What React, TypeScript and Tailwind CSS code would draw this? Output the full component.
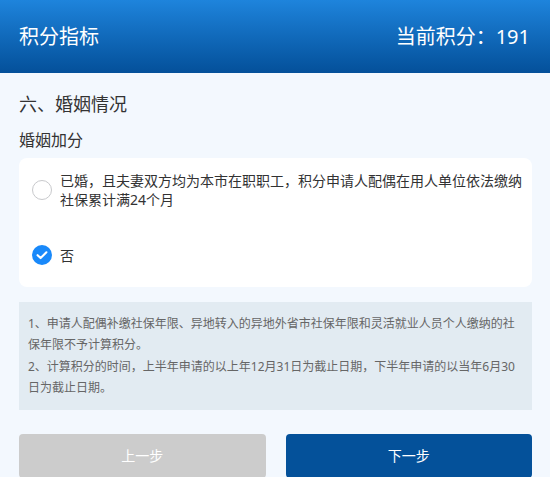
const notes = [
  ["1、申请人配偶补缴社保年限、异地转入的异地外省市社保年限和灵活就业人员个人缴纳的社", "保年限不予计算积分。"],
  ["2、计算积分的时间，上半年申请的以上年12月31日为截止日期，下半年申请的以当年6月30", "日为截止日期。"],
];

function RadioIcon({ checked }: { checked: boolean }) {
  if (!checked) {
    return (
      <span className="block h-[20px] w-[20px] shrink-0 rounded-full border border-[#c8c9cc] bg-white" />
    );
  }
  return (
    <svg viewBox="0 0 20 20" className="h-[20px] w-[20px] shrink-0">
      <circle cx="10" cy="10" r="10" fill="#1989fa" />
      <path
        d="M5.6 10.2 L8.6 13.1 L14.4 7.3"
        fill="none"
        stroke="#fff"
        strokeWidth="2.1"
        strokeLinecap="round"
        strokeLinejoin="round"
      />
    </svg>
  );
}

function Option({ lines, checked }: { lines: string[]; checked: boolean }) {
  return (
    <div className="flex items-center gap-[8px]">
      <RadioIcon checked={checked} />
      <p className="text-[14px] leading-[19px] text-[#323233]">
        {lines.map((line) => (
          <span key={line} className="block whitespace-nowrap">
            {line}
          </span>
        ))}
      </p>
    </div>
  );
}

export default function App() {
  return (
    <div
      className="min-h-[477px] bg-[#f3f8fe]"
      style={{ fontFamily: '"Noto Sans", "Noto Sans CJK SC", sans-serif' }}
    >
      <header className="flex h-[73px] items-center justify-between bg-gradient-to-b from-[#1e84dc] to-[#04509a] pl-[19px] pr-[20px] text-white">
        <h1 className="text-[20px] leading-[28px]">积分指标</h1>
        <p className="text-[20px] leading-[28px]">当前积分：191</p>
      </header>

      <main className="pl-[19px] pr-[18px] pt-[18px]">
        <h2 className="text-[18px] leading-[27px] text-[#333]">六、婚姻情况</h2>
        <h3 className="mt-[10px] text-[16px] leading-[24px] text-[#333]">婚姻加分</h3>

        <div className="mt-[6px] rounded-[8px] bg-white pb-[22px] pl-[13px] pt-[13px]">
          <Option
            checked={false}
            lines={[
              "已婚，且夫妻双方均为本市在职职工，积分申请人配偶在用人单位依法缴纳",
              "社保累计满24个月",
            ]}
          />
          <div className="mt-[36px]">
            <Option checked lines={["否"]} />
          </div>
        </div>

        <div className="mt-[15px] bg-[#e2ebf2] py-[11px] pl-[9px] text-[12px] leading-[21.4px] text-[#666]">
          {notes.map((note) => (
            <p key={note[0]}>
              {note.map((line) => (
                <span key={line} className="block whitespace-nowrap">
                  {line}
                </span>
              ))}
            </p>
          ))}
        </div>

        <div className="mt-[24px] flex gap-[20px] pb-[10px]">
          <button className="h-[44px] flex-1 rounded-[4px] bg-[#cccccc] text-[14px] text-white">
            上一步
          </button>
          <button className="h-[44px] flex-1 rounded-[4px] bg-[#04519a] text-[14px] text-white">
            下一步
          </button>
        </div>
      </main>
    </div>
  );
}
